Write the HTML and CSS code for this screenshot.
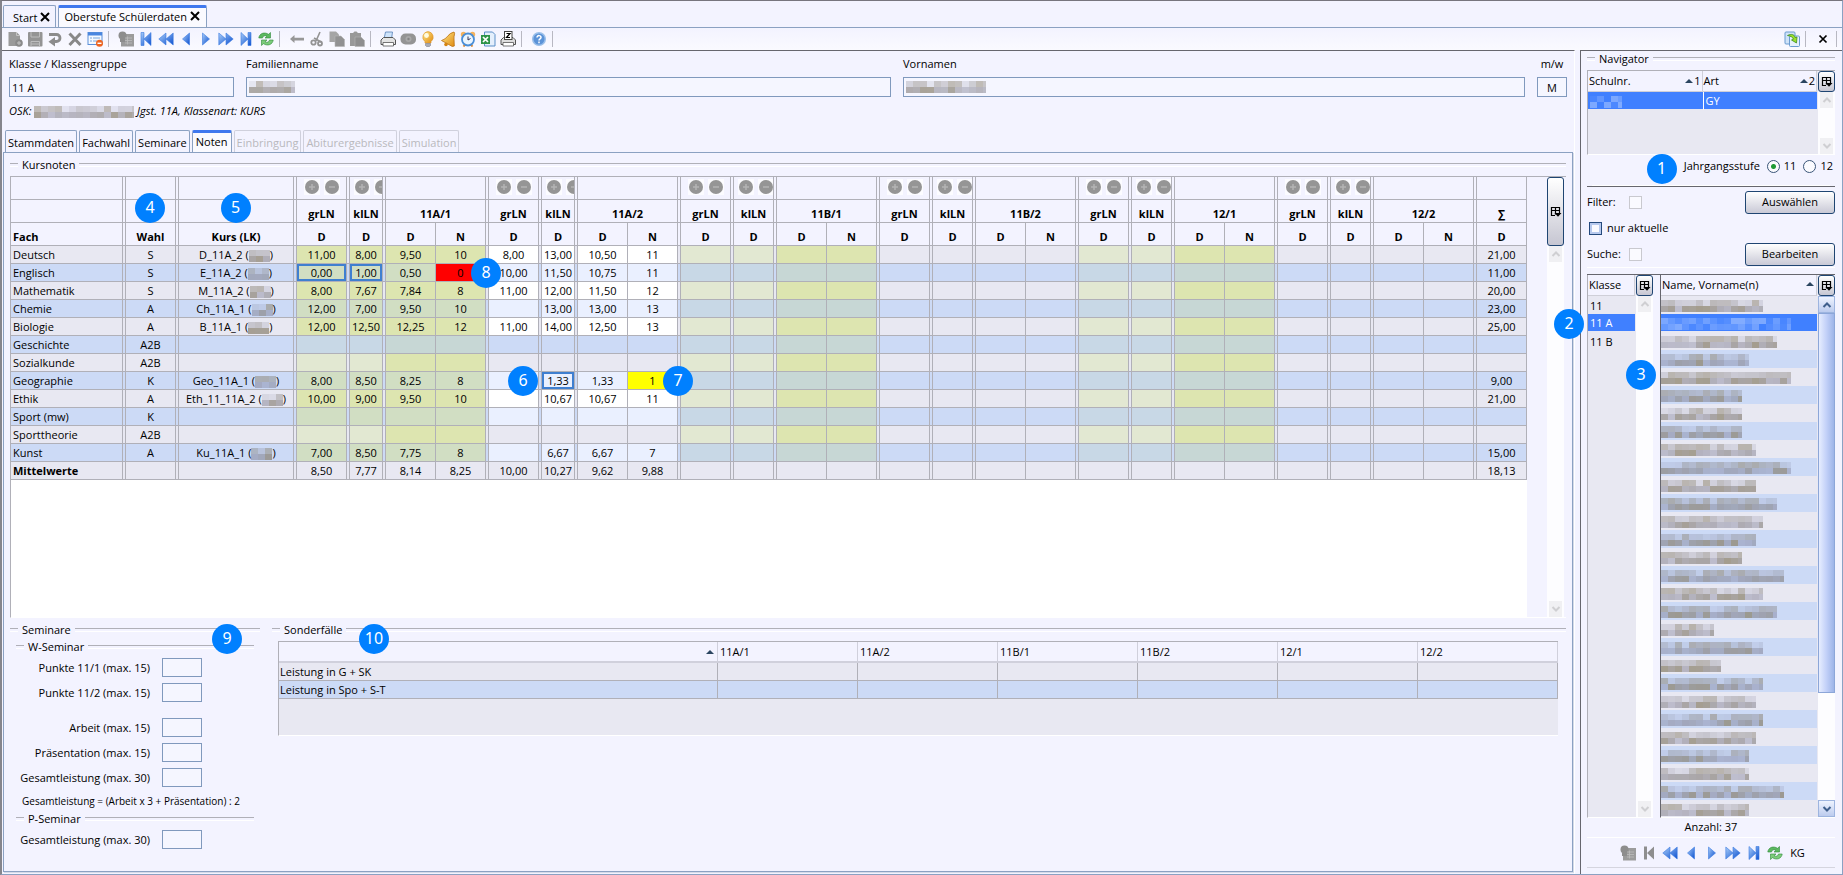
FILE: index.html
```html
<!DOCTYPE html>
<html lang="de">
<head>
    <meta charset="UTF-8">
    <meta name="viewport" content="width=device-width, initial-scale=1.0">
    <title>Oberstufe Schülerdaten</title>
    <link rel="stylesheet" href="styles.css">
</head>
<body>
    <svg class="sprite" aria-hidden="true">
        <defs>
            <linearGradient id="blue" x1="0" y1="0" x2="1" y2="1">
                <stop offset="0" stop-color="#a9cdf8"/>
                <stop offset="1" stop-color="#0a4fd0"/>
            </linearGradient>
            <linearGradient id="gold" x1="0" y1="0" x2="1" y2="1">
                <stop offset="0" stop-color="#ffe88a"/>
                <stop offset="1" stop-color="#e08a10"/>
            </linearGradient>
        </defs>
        <symbol id="new" viewBox="0 0 16 16"><path d="M1.500 1h8l3.500 3.500V15H1.500z" fill="#9a9a9a"/><path d="M9.500 1v3.500H13" fill="none" stroke="#c4c4c4"/><circle cx="12" cy="12" r="3.800" fill="#8a8a8a"/><path d="M12 10v4M10 12h4" stroke="#c4c4c4"/></symbol>
        <symbol id="save" viewBox="0 0 16 16"><rect x="1" y="1" width="14.500" height="14.500" rx="1" fill="#949494"/><path d="M4 1v5h8.500V1M4 15.500v-5h8.500v5M4 13h8" fill="none" stroke="#bdbdbd"/></symbol>
        <symbol id="undo" viewBox="0 0 16 16"><path d="M2 3.500h7.500a3.500 3.500 0 0 1 0 7H7" fill="none" stroke="#8c8c8c" stroke-width="2.800"/><path d="M8 6v9.500L1.500 10.700z" fill="#8c8c8c"/></symbol>
        <symbol id="delete" viewBox="0 0 16 16"><path d="M2.500 2.500l11 11.500M13.500 2.500L2.500 14" stroke="#888" stroke-width="3"/></symbol>
        <symbol id="form" viewBox="0 0 16 16"><rect x="1" y="1.500" width="14" height="12" fill="#f4f9ff" stroke="#5b8fd8"/><path d="M1 3h14" stroke="#4a86e0" stroke-width="3"/><path d="M3 7h2M6 7h7M3 10h2M6 10h4" stroke="#7aa6dc"/><circle cx="12.500" cy="12.300" r="3.500" fill="#ee6420"/><path d="M10.500 12.300h4" stroke="#fff" stroke-width="1.400"/></symbol>
        <symbol id="table" viewBox="0 0 16 16"><rect x="3" y="3" width="13" height="12.500" fill="#9b9b9b"/><circle cx="4.500" cy="4.500" r="4" fill="#8d8d8d"/><path d="M2 8h5v3H2z" fill="#8d8d8d"/><path d="M7 7h7M7 9.500h7M7 12h7M9.500 5.500v8" stroke="#bcbcbc" stroke-width=".8"/></symbol>
        <symbol id="first" viewBox="0 0 16 16"><path d="M3 1.500h3v13H3zM13 1.500v13L6 8z" fill="url(#blue)" stroke="#3a7be0" stroke-width=".6"/></symbol>
        <symbol id="first-off" viewBox="0 0 16 16"><path d="M3 1.500h3v13H3zM13 1.500v13L6 8z" fill="#8e8e8e"/></symbol>
        <symbol id="rewind" viewBox="0 0 16 16"><path d="M8 2v12L.8 8zM15.200 2v12L8 8z" fill="url(#blue)" stroke="#3a7be0" stroke-width=".6"/></symbol>
        <symbol id="prev" viewBox="0 0 16 16"><path d="M11.500 2v12L4.500 8z" fill="url(#blue)" stroke="#3a7be0" stroke-width=".6"/></symbol>
        <symbol id="next" viewBox="0 0 16 16"><path d="M4.500 2v12L11.500 8z" fill="url(#blue)" stroke="#3a7be0" stroke-width=".6"/></symbol>
        <symbol id="forward" viewBox="0 0 16 16"><path d="M.8 2v12L8 8zM8 2v12L15.200 8z" fill="url(#blue)" stroke="#3a7be0" stroke-width=".6"/></symbol>
        <symbol id="last" viewBox="0 0 16 16"><path d="M3 1.500v13L10 8zM10 1.500h3v13h-3z" fill="url(#blue)" stroke="#3a7be0" stroke-width=".6"/></symbol>
        <symbol id="refresh" viewBox="0 0 16 16"><path d="M.8 7c.5-4.500 5.500-6.500 9.700-3.700L12.500 1.500v5.500H7l2-1.700C6.500 4 5 5 4.500 7z" fill="#5cb860" stroke="#2f8a3a" stroke-width=".6"/><path d="M15.200 9c-.5 4.500-5.500 6.500-9.700 3.700L3.500 14.500V9H9l-2 1.700c2.500 1.300 4 .3 4.500-1.700z" fill="#7ccc7a" stroke="#2f8a3a" stroke-width=".6"/></symbol>
        <symbol id="arrow" viewBox="0 0 16 16"><path d="M1 8l4.500-4v2.700H15v2.800H5.500V12z" fill="#979797"/></symbol>
        <symbol id="cut" viewBox="0 0 16 16"><path d="M11 1L7 10M5 7l7 4" stroke="#939393" stroke-width="1.600" fill="none"/><circle cx="4.500" cy="11.500" r="2.200" fill="none" stroke="#939393" stroke-width="1.800"/><circle cx="11" cy="12.500" r="2" fill="none" stroke="#939393" stroke-width="1.800"/></symbol>
        <symbol id="copy" viewBox="0 0 16 16"><path d="M.5.5h6.500l3 3V11H.5z" fill="#a5a5a5"/><path d="M6 5h6l3.500 3.500v7H6z" fill="#929292" stroke="#b5b5b5" stroke-width=".6"/></symbol>
        <symbol id="paste" viewBox="0 0 16 16"><path d="M1 2h3l1.500-1.500h2L9 2h3v13H1z" fill="#999"/><path d="M6 6h6l3.500 3.500v6H6z" fill="#8f8f8f" stroke="#b5b5b5" stroke-width=".6"/></symbol>
        <symbol id="print" viewBox="0 0 16 16"><path d="M4 8L5.500 1h7L11.500 8z" fill="#cfe4fb" stroke="#5580b8" stroke-width=".8"/><path d="M1 9l2.500-2.500h9.500L15.500 9v4.500H1z" fill="#e4e4e4" stroke="#555"/><path d="M3 11.500h10.500v3.500H3z" fill="#fff" stroke="#555" stroke-width=".8"/></symbol>
        <symbol id="eye" viewBox="0 0 16 16"><rect x=".5" y="2.500" width="15.500" height="11" rx="5" fill="#949494"/><circle cx="8.500" cy="8" r="3" fill="#a8a8a8"/><circle cx="8.500" cy="8" r="1.200" fill="#858585"/></symbol>
        <symbol id="bulb" viewBox="0 0 16 16"><path d="M8 .6a5.600 5.600 0 0 1 3 10V12H5v-1.400A5.600 5.600 0 0 1 8 .6z" fill="url(#gold)" stroke="#e09a30" stroke-width=".7"/><circle cx="6.500" cy="4.500" r="2.400" fill="#fffbe0"/><path d="M5.500 12.500h5v2l-1 1h-3l-1-1z" fill="#a9abb5" stroke="#6f7280" stroke-width=".5"/></symbol>
        <symbol id="bell" viewBox="0 0 16 16"><path d="M14 1c1.500 1.500-.5 4 0 7l.3 7-2 .5L1.500 9.500C7 8.500 8 2 14 1z" fill="url(#gold)" stroke="#b97010" stroke-width=".8"/><circle cx="6" cy="13.500" r="1.800" fill="#d58412"/></symbol>
        <symbol id="clock" viewBox="0 0 16 16"><circle cx="3.500" cy="3.500" r="2.700" fill="#f4b25e"/><circle cx="12.500" cy="3.500" r="2.700" fill="#f4b25e"/><path d="M3.500 15.500l2-2.500M12.500 15.500l-2-2.500" stroke="#e08a30" stroke-width="2"/><circle cx="8" cy="8.500" r="6" fill="#eaf5ff" stroke="#4a8ed6" stroke-width="1.800"/><path d="M8 5.500v3.500l2.500-1.500" fill="none" stroke="#335"/></symbol>
        <symbol id="excel" viewBox="0 0 16 16"><path d="M4.500 1h8l2.500 2.500V15H4.500z" fill="#e4effc" stroke="#5b8fc8"/><rect x="1" y="4" width="9" height="9" fill="#2e9448"/><path d="M3 6l5 5M8 6l-5 5" stroke="#fff" stroke-width="1.700"/></symbol>
        <symbol id="print-z" viewBox="0 0 16 16"><path d="M1 9l2.500-2.500h9.500L15.500 9v4.500H1z" fill="#dedede" stroke="#555"/><path d="M3 11.500h10.500v3.500H3z" fill="#fff" stroke="#555" stroke-width=".8"/><rect x="4.500" y=".5" width="7.500" height="8" fill="#fff" stroke="#444"/><path d="M6.500 2.500h3.500L6.500 6.500H10" fill="none" stroke="#000" stroke-width="1.200"/></symbol>
        <symbol id="help" viewBox="0 0 16 16"><circle cx="8" cy="8" r="6.300" fill="#5b93d8" stroke="#9cc0ea" stroke-width="1.500"/><path d="M6 6.500c0-2.600 4-2.400 4 0 0 1.500-2 1.400-2 3M8 10.500v1.700" fill="none" stroke="#fff" stroke-width="1.500"/></symbol>
        <symbol id="export" viewBox="0 0 16 16"><rect x="1" y="1" width="10" height="12" rx="1" fill="#cfe3f8" stroke="#6a9bd0"/><rect x="5.500" y="5" width="10" height="10.500" rx="1" fill="#e6f1fd" stroke="#6a9bd0"/><path d="M3.500 4.500c4-2 7-1 7.500 2l2-.5-.5 6-5-3 2-.8C9 6.500 7 5 3.500 4.500z" fill="#9ae02c" stroke="#3c8a1c" stroke-width=".8"/></symbol>
        <symbol id="close" viewBox="0 0 16 16"><path d="M4.500 4.500l7 7M11.500 4.500l-7 7" stroke="#000" stroke-width="1.700"/></symbol>
        <symbol id="close-tab" viewBox="0 0 12 12"><path d="M2 2l8 8M10 2l-8 8" stroke="#000" stroke-width="2"/></symbol>
        <symbol id="plus" viewBox="0 0 16 16"><circle cx="8" cy="8" r="7" fill="#959595"/><path d="M8 5v6M5 8h6" stroke="#b4b4b4" stroke-width="1.500"/></symbol>
        <symbol id="minus" viewBox="0 0 16 16"><circle cx="8" cy="8" r="7" fill="#959595"/><path d="M5 8h6" stroke="#b4b4b4" stroke-width="1.500"/></symbol>
        <symbol id="columns" viewBox="0 0 12 12"><path d="M1.500 1.500h8v3h-8zM1.500 4.500v5H5M5.500 1.500v7M1.500 4.500h8V7" fill="none" stroke="#000" stroke-width="1.200"/><path d="M4.500 7h7L8 10.700z"/></symbol>
        <symbol id="up" viewBox="0 0 10 10"><path d="M1.500 7L5 3.500 8.500 7" fill="none" stroke="currentColor" stroke-width="2"/></symbol>
        <symbol id="down" viewBox="0 0 10 10"><path d="M1.500 3L5 6.500 8.500 3" fill="none" stroke="currentColor" stroke-width="2"/></symbol>
    </svg>

    <nav class="window-tabs">
        <div class="window-tab">Start <button class="tab-close" aria-label="Start schließen"><svg><use href="#close-tab"/></svg></button></div>
        <div class="window-tab active">Oberstufe Schülerdaten <button class="tab-close" aria-label="Oberstufe schließen"><svg><use href="#close-tab"/></svg></button></div>
    </nav>

    <div class="toolbar">
        <div class="tools" data-icons="new save undo delete form"></div>
        <div class="tools" data-icons="table first rewind prev next forward last refresh"></div>
        <div class="tools" data-icons="arrow cut copy paste"></div>
        <div class="tools" data-icons="print eye bulb bell clock excel print-z"></div>
        <div class="tools" data-icons="help"></div>
        <div class="tools end" data-icons="export"></div>
        <div class="tools" data-icons="close"></div>
    </div>

    <div class="workspace">
        <main class="main-pane">
            <div class="student">
                <div class="field">
                    <label for="klasse">Klasse / Klassengruppe</label>
                    <input type="text" id="klasse" value="11 A">
                </div>
                <div class="field">
                    <label for="familienname">Familienname</label>
                    <div class="masked"><input type="text" id="familienname"><span class="mosaic" data-width="46"></span></div>
                </div>
                <div class="field">
                    <label for="vornamen">Vornamen</label>
                    <div class="masked"><input type="text" id="vornamen"><span class="mosaic" data-width="80"></span></div>
                </div>
                <div class="field sex">
                    <label for="mw">m/w</label>
                    <input type="text" id="mw" value="M">
                </div>
            </div>
            <p class="osk">OSK: <span class="mosaic" data-width="100"></span> Jgst. 11A, Klassenart: KURS</p>

            <div class="tabs">
                <button>Stammdaten</button>
                <button>Fachwahl</button>
                <button>Seminare</button>
                <button class="active">Noten</button>
                <button disabled>Einbringung</button>
                <button disabled>Abiturergebnisse</button>
                <button disabled>Simulation</button>
            </div>

            <div class="tab-page">
                <h2 class="titled">Kursnoten</h2>
                <div class="grades-pane">
                    <div class="grades-scroll">
                        <table class="grades" id="grades"></table>
                    </div>
                    <div class="scroll-side">
                        <button class="columns-button" aria-label="Spalten"><svg><use href="#columns"/></svg></button>
                        <div class="scrollbar">
                            <button aria-label="Nach oben"><svg><use href="#up"/></svg></button>
                            <button aria-label="Nach unten"><svg><use href="#down"/></svg></button>
                        </div>
                    </div>
                </div>

                <div class="lower">
                    <section class="seminars">
                        <h2 class="titled">Seminare</h2>
                        <span class="mark mark-nine">9</span>
                        <div class="seminar-group">
                            <h3 class="titled">W-Seminar</h3>
                            <div class="points"><label for="p1">Punkte 11/1 (max. 15)</label><input type="text" id="p1"></div>
                            <div class="points spaced"><label for="p2">Punkte 11/2 (max. 15)</label><input type="text" id="p2"></div>
                            <div class="points"><label for="arbeit">Arbeit (max. 15)</label><input type="text" id="arbeit"></div>
                            <div class="points"><label for="praes">Präsentation (max. 15)</label><input type="text" id="praes"></div>
                            <div class="points"><label for="wges">Gesamtleistung (max. 30)</label><input type="text" id="wges"></div>
                            <p class="formula">Gesamtleistung = (Arbeit x 3 + Präsentation) : 2</p>
                            <h3 class="titled">P-Seminar</h3>
                            <div class="points"><label for="pges">Gesamtleistung (max. 30)</label><input type="text" id="pges"></div>
                        </div>
                    </section>
                    <section class="special">
                        <h2 class="titled">Sonderfälle</h2>
                        <span class="mark mark-ten">10</span>
                        <div class="special-pane">
                            <table class="special-table">
                                <thead>
                                    <tr><th class="sorted"><span class="sort"></span></th><th>11A/1</th><th>11A/2</th><th>11B/1</th><th>11B/2</th><th>12/1</th><th>12/2</th></tr>
                                </thead>
                                <tbody>
                                    <tr><td>Leistung in G + SK</td><td></td><td></td><td></td><td></td><td></td><td></td></tr>
                                    <tr><td>Leistung in Spo + S-T</td><td></td><td></td><td></td><td></td><td></td><td></td></tr>
                                </tbody>
                            </table>
                        </div>
                    </section>
                </div>
            </div>
        </main>

        <aside class="navigator">
            <h2 class="titled">Navigator</h2>
            <div class="list-pane schools">
                <table class="list">
                    <thead><tr><th><div class="head">Schulnr. <span><i class="sort"></i>1</span></div></th><th><div class="head">Art <span><i class="sort"></i>2</span></div></th></tr></thead>
                    <tbody><tr class="selected"><td><span class="mosaic light" data-width="32"></span></td><td>GY</td></tr></tbody>
                </table>
                <div class="scroll-side">
                    <button class="columns-button" aria-label="Spalten"><svg><use href="#columns"/></svg></button>
                    <div class="scrollbar">
                        <button aria-label="Nach oben"><svg><use href="#up"/></svg></button>
                        <button aria-label="Nach unten"><svg><use href="#down"/></svg></button>
                    </div>
                </div>
            </div>

            <div class="year">
                <span class="mark">1</span>
                <span>Jahrgangsstufe</span>
                <label><input type="radio" name="stufe" checked> 11</label>
                <label><input type="radio" name="stufe"> 12</label>
            </div>

            <div class="filters">
                <label for="filter">Filter:</label>
                <input type="checkbox" id="filter" disabled>
                <button class="push">Auswählen</button>
                <label class="current"><input type="checkbox"> nur aktuelle</label>
                <label for="suche">Suche:</label>
                <input type="checkbox" id="suche" disabled>
                <button class="push">Bearbeiten</button>
            </div>

            <div class="lists">
                <div class="list-pane classes">
                    <table class="list">
                        <thead><tr><th>Klasse</th></tr></thead>
                        <tbody>
                            <tr><td>11</td></tr>
                            <tr class="selected"><td>11 A<span class="mark mark-two">2</span></td></tr>
                            <tr><td>11 B</td></tr>
                        </tbody>
                    </table>
                    <div class="scroll-side">
                        <button class="columns-button" aria-label="Spalten"><svg><use href="#columns"/></svg></button>
                        <div class="scrollbar">
                            <button aria-label="Nach oben"><svg><use href="#up"/></svg></button>
                            <button aria-label="Nach unten"><svg><use href="#down"/></svg></button>
                        </div>
                    </div>
                    <span class="mark mark-three">3</span>
                </div>
                <div class="list-pane names">
                    <table class="list">
                        <thead><tr><th><div class="head">Name, Vorname(n) <i class="sort"></i></div></th></tr></thead>
                        <tbody id="names"></tbody>
                    </table>
                    <div class="scroll-side">
                        <button class="columns-button" aria-label="Spalten"><svg><use href="#columns"/></svg></button>
                        <div class="scrollbar live">
                            <button aria-label="Nach oben"><svg><use href="#up"/></svg></button>
                            <div class="thumb"></div>
                            <button aria-label="Nach unten"><svg><use href="#down"/></svg></button>
                        </div>
                    </div>
                </div>
            </div>
            <p class="count">Anzahl: 37</p>
            <div class="nav-tools">
                <div class="tools" data-icons="table first-off rewind prev next forward last refresh"></div>
                <span>KG</span>
            </div>
        </aside>
    </div>

    <script>
        // Toolbar buttons
        document.querySelectorAll('.tools').forEach(group => {
            group.innerHTML = group.dataset.icons.split(' ')
                .map(name => `<button aria-label="${name}"><svg><use href="#${name}"/></svg></button>`)
                .join('');
        });

        // Grades table: per half-year grLN, klLN, D, N
        const terms = ['11A/1', '11A/2', '11B/1', '11B/2', '12/1', '12/2'];
        const rows = [
            ['Deutsch', 'S', 'D_11A_2', '11,00 8,00 9,50 10', '8,00 13,00 10,50 11', '21,00'],
            ['Englisch', 'S', 'E_11A_2', '0,00 1,00 0,50 0', '10,00 11,50 10,75 11', '11,00'],
            ['Mathematik', 'S', 'M_11A_2', '8,00 7,67 7,84 8', '11,00 12,00 11,50 12', '20,00'],
            ['Chemie', 'A', 'Ch_11A_1', '12,00 7,00 9,50 10', '- 13,00 13,00 13', '23,00'],
            ['Biologie', 'A', 'B_11A_1', '12,00 12,50 12,25 12', '11,00 14,00 12,50 13', '25,00'],
            ['Geschichte', 'A2B', '', '', '', ''],
            ['Sozialkunde', 'A2B', '', '', '', ''],
            ['Geographie', 'K', 'Geo_11A_1', '8,00 8,50 8,25 8', '- 1,33 1,33 1', '9,00'],
            ['Ethik', 'A', 'Eth_11_11A_2', '10,00 9,00 9,50 10', '- 10,67 10,67 11', '21,00'],
            ['Sport (mw)', 'K', '', '', '', ''],
            ['Sporttheorie', 'A2B', '', '', '', ''],
            ['Kunst', 'A', 'Ku_11A_1', '7,00 8,50 7,75 8', '- 6,67 6,67 7', '15,00'],
            ['Mittelwerte', '', '', '8,50 7,77 8,14 8,25', '10,00 10,27 9,62 9,88', '18,13']
        ];
        const extras = {
            'Englisch-0-0': 'focus', 'Englisch-0-1': 'focus', 'Englisch-0-3': 'failed',
            'Geographie-1-1': 'focus', 'Geographie-1-3': 'warning'
        };
        const marks = {
            'Englisch-0-3': '<span class="mark mark-edge">8</span>',
            'Geographie-1-0': '<span class="mark mark-inside">6</span>',
            'Geographie-1-3': '<span class="mark mark-edge">7</span>'
        };
        const steppers = '<div class="steppers"><button aria-label="mehr"><svg><use href="#plus"/></svg></button><button aria-label="weniger"><svg><use href="#minus"/></svg></button></div>';

        let html = '<colgroup><col class="c-fach"><col class="c-d"><col class="c-kurs">';
        terms.forEach((t, i) => {
            html += `<col class="c-d"><col class="${i < 2 ? 'c-kl' : 'c-kl-wide'}"><col class="c-d"><col class="c-n">`;
        });
        html += '<col class="c-d"></colgroup><thead>';
        html += '<tr class="stepper-row"><th></th><th class="g"></th><th class="g"></th>';
        terms.forEach(() => {
            html += `<th class="g">${steppers}</th><th class="g kl">${steppers}</th><th class="g" colspan="2"></th>`;
        });
        html += '<th class="g"></th></tr><tr><th></th><th class="g"><span class="mark mark-head">4</span></th><th class="g"><span class="mark mark-head">5</span></th>';
        terms.forEach(t => {
            html += `<th class="g">grLN</th><th class="g">klLN</th><th class="g" colspan="2">${t}</th>`;
        });
        html += '<th class="g">∑</th></tr><tr><th class="fach">Fach</th><th class="g">Wahl</th><th class="g">Kurs (LK)</th>';
        terms.forEach(() => {
            html += '<th class="g">D</th><th class="g">D</th><th class="g">D</th><th>N</th>';
        });
        html += '<th class="g">D</th></tr></thead><tbody>';

        rows.forEach(([fach, wahl, kurs, first, second, sum]) => {
            const mean = fach === 'Mittelwerte';
            const open = first !== '' || fach === 'Sport (mw)';
            const course = kurs ? `${kurs} (<span class="mosaic" data-width="21"></span>)` : '';
            html += `<tr class="${mean ? 'mean' : ''}"><td class="fach">${fach}</td><td class="g">${wahl}</td><td class="g">${course}</td>`;
            terms.forEach((term, t) => {
                const values = (t === 0 ? first : t === 1 ? second : '').split(' ');
                for (let c = 0; c < 4; c++) {
                    const key = `${fach}-${t}-${c}`;
                    const names = [];
                    if (c < 3) names.push('g');
                    if (!mean) {
                        if (t === 0) names.push(open ? 'tint-open' : c < 2 ? 'tint-soft' : 'tint');
                        else if (t === 1 && open) names.push('editable');
                        else if (t === 2 || t === 4) names.push(c < 2 ? 'tint-soft' : 'tint');
                    }
                    if (extras[key]) names.push(extras[key]);
                    const value = !values[c] || values[c] === '-' ? '' : values[c];
                    html += `<td class="${names.join(' ')}">${value}${marks[key] || ''}</td>`;
                }
            });
            html += `<td class="g">${sum}</td></tr>`;
        });
        document.getElementById('grades').innerHTML = html + '</tbody>';

        // Student names are masked, only their lengths are known
        const lengths = [102, 130, 116, 88, 130, 81, 81, 81, 95, 130, 95, 116, 102, 95, 81, 123, 102, 116, 53, 102, 60, 102, 95, 102, 95, 88, 88, 123, 88];
        document.getElementById('names').innerHTML = lengths.map((w, i) =>
            `<tr class="${i === 1 ? 'selected' : ''}"><td><span class="mosaic ${i === 1 ? 'vivid' : ''}" data-width="${w}"></span></td></tr>`
        ).join('');

        // Fill every masked text with a mosaic of 7px blocks
        let seed = 7;
        const random = () => (seed = (seed * 16807) % 2147483647) / 2147483647;
        document.querySelectorAll('.mosaic').forEach(el => {
            const width = Number(el.dataset.width);
            let rects = '';
            for (let y = 0; y < 2; y++) {
                for (let x = 0; x < width; x += 7) {
                    const r = random();
                    let fill = `rgba(${95 + r * 40}, ${95 + r * 30}, ${125 - r * 25}, ${y ? 0.3 + r * 0.4 : 0.1 + r * 0.4})`;
                    if (el.classList.contains('vivid') || el.classList.contains('light')) fill = `rgba(255, 255, 255, ${r * 0.35})`;
                    rects += `<rect x="${x}" y="${y * 6}" width="7" height="6" fill="${fill}"/>`;
                }
            }
            el.innerHTML = `<svg width="${width}" height="12">${rects}</svg>`;
        });
    </script>
</body>
</html>
```
FILE: styles.css
```css
* { box-sizing: border-box; }
body {
    --bg: #f3f3ff;
    --line: #b0b0b8;
    --dark: #66666e;
    --edge: #8ba1c2;
    --odd: #e8e8f2;
    --even: #ccdaf6;
    --select: #4080ff;
    margin: 0;
    height: 100vh;
    display: flex;
    flex-direction: column;
    overflow: hidden;
    background: var(--bg);
    border-top: 1px solid #77757e;
    border-left: 2px solid #85858c;
    border-right: 1px solid var(--edge);
    border-bottom: 1px solid var(--edge);
    font: 11px/16px "Open Sans", "Noto Sans", sans-serif;
    color: #000;
}
h2, h3, p { margin: 0; font-size: 11px; font-weight: normal; }
button, input { font: inherit; color: inherit; margin: 0; }
button { padding: 0; border: 0; background: none; }
svg { display: block; }
.sprite { position: absolute; width: 0; height: 0; }
table { border-collapse: separate; border-spacing: 0; table-layout: fixed; }
th, td { padding: 0; }
input[type=text] { border: 1px solid #8099bd; background: #f5f6ff; outline: 0; }

/* window tabs and toolbar */
.window-tabs { display: flex; gap: 2px; height: 27px; padding: 4px 0 0 1px; border-bottom: 1px solid var(--edge); }
.window-tab { display: flex; align-items: center; gap: 2px; padding: 2px 4px 0 9px; border: 1px solid var(--edge); border-bottom: 0; border-radius: 2px 2px 0 0; }
.window-tab.active { padding: 0 5px 2px; border-top: 3px solid #3f78ee; background: #fafaff; }
.tab-close { padding-bottom: 2px; }
.tab-close svg { width: 12px; height: 12px; }
.toolbar { display: flex; align-items: center; height: 22px; padding: 0 5px 0 3px; background: linear-gradient(#f3f3ff, #fafaff); }
.tools { display: grid; grid-auto-flow: column; grid-auto-columns: 20px; }
.tools button { display: flex; justify-content: center; }
.tools svg { width: 16px; height: 16px; }
.toolbar .tools { padding-right: 3px; margin-right: 7px; border-right: 1px solid #b8b8c2; }
.toolbar .end { margin-left: auto; }
.toolbar .tools:last-child { margin-right: 0; }

/* panes */
.workspace { flex: 1; display: flex; gap: 5px; min-height: 0; }
.main-pane { flex: 1; min-width: 0; display: flex; flex-direction: column; padding: 5px 1px 2px; border-top: 1px solid var(--dark); border-right: 1px solid #fff; }
.student { display: grid; grid-template-columns: 225px 645fr 622fr 30px; gap: 12px; padding: 0 6px; }
.field { display: flex; flex-direction: column; gap: 5px; }
.field input { width: 100%; height: 20px; padding: 0 2px; }
.sex { text-align: center; }
.sex input { text-align: center; }
.masked { position: relative; }
.masked .mosaic { position: absolute; left: 3px; top: 4px; }
.mosaic { display: inline-block; vertical-align: middle; }
.osk { margin-top: 6px; padding-left: 6px; font-style: italic; }
.tabs { display: flex; gap: 2px; height: 22px; margin-top: 11px; padding-left: 2px; }
.tabs button { padding: 3px 2px 0; border: 1px solid var(--edge); border-bottom: 0; border-radius: 2px 2px 0 0; }
.tabs .active { padding: 0 3px 2px; border-top: 3px solid #3f78ee; background: #fafaff; }
.tabs button:disabled { color: #b9b9bd; border-color: #cfd0dc; }
.tab-page { flex: 1; min-height: 0; display: flex; flex-direction: column; padding: 4px 6px 22px; border: 1px solid var(--edge); box-shadow: 1px 1px 0 #d5dae8; }
.titled { display: flex; align-items: center; gap: 4px; white-space: nowrap; }
.titled::before, .titled::after { content: ""; height: 2px; border-top: 1px solid var(--line); border-bottom: 1px solid #fff; }
.titled::before { width: 8px; }
.titled::after { flex: 1; }

/* scroll bars */
.scroll-side { display: flex; flex-direction: column; flex: none; width: 17px; }
.columns-button { display: flex; align-items: center; justify-content: center; height: 21px; border: 1px solid #1f4572; border-radius: 3px; background: linear-gradient(#fff, #c6c6d2); }
.columns-button svg { width: 12px; height: 12px; }
.scrollbar { flex: 1; display: flex; flex-direction: column; justify-content: space-between; background: #fdfdff; }
.scrollbar button { display: flex; align-items: center; justify-content: center; height: 16px; margin: 0 2px; color: #cfcfd2; background: #f0f0f3; }
.scrollbar svg { width: 10px; height: 10px; }
.live button { height: 17px; margin: 0; color: #3f5f8c; border: 1px solid #9db4df; background: linear-gradient(#eef3ff, #bccbee); }
.live .thumb { flex: 0 1 380px; margin-bottom: auto; border: 1px solid #8ca6d8; background: linear-gradient(to right, #e6edff, #c2d0f8 50%, #9db4e8); }

/* grades */
.grades-pane { flex: 1; min-height: 0; display: flex; justify-content: space-between; margin-top: 3px; border-top: 1px solid var(--line); border-left: 1px solid var(--line); border-bottom: 1px solid #fff; }
.grades-scroll { min-width: 0; background: #fff; overflow: hidden; }
.grades-pane .scroll-side { margin-right: 2px; }
.grades-pane .columns-button { height: 69px; }
.grades { width: 1516px; }
.c-fach { width: 112px; }
.c-d { width: 53px; }
.c-kurs { width: 118px; }
.c-kl { width: 36px; }
.c-kl-wide { width: 43px; }
.c-n { width: 50px; }
.grades tr { --row: var(--odd); }
.grades thead tr { --row: var(--bg); }
.grades tbody tr:nth-child(even) { --row: var(--even); }
.grades th, .grades td { position: relative; background-color: var(--row); border-right: 1px solid var(--line); border-bottom: 1px solid var(--line); text-align: center; white-space: nowrap; }
.grades th { height: 23px; padding-top: 5px; font-weight: bold; }
.grades .stepper-row th { padding-top: 0; padding-bottom: 2px; }
.grades td { height: 18px; line-height: 17px; }
/* double line in front of a column group */
.grades .g { padding-left: 3px; background-image: linear-gradient(to right, var(--row) 2px, var(--line) 2px, var(--line) 3px, transparent 3px); }
.grades .fach { padding-left: 2px; text-align: left; }
.grades .mean .fach { font-weight: bold; }
.steppers { display: flex; justify-content: center; gap: 4px; }
.steppers button { background: #fcfcff; }
.steppers svg { width: 16px; height: 16px; }
.kl .steppers { justify-content: flex-start; padding-left: 4px; overflow: hidden; }
.kl .steppers button { flex: none; }
.grades .tint, .grades .tint-open { background-color: #dde5b0; }
.grades .tint-soft { background-color: #e2e8d2; }
.grades .editable { background-color: #fff; }
.grades tr:nth-child(even) .tint { background-color: #c7d7d5; }
.grades tr:nth-child(even) .tint-soft { background-color: #c8d8e6; }
.grades tr:nth-child(even) .tint-open { background-color: #d1dec3; }
.grades tr:nth-child(even) .editable { background-color: #eaf0ff; }
.grades tr .failed.failed { background-color: #f00; }
.grades tr:nth-child(even) .warning { background-color: #ff0; }
.focus::before { content: ""; position: absolute; inset: 0 0 0 3px; border: 2px solid #3f7fd0; }

/* numbered markers */
.mark { display: block; flex: none; width: 30px; height: 30px; border-radius: 50%; background: #0080ff; color: #fff; font: 16px/29px "Noto Sans", sans-serif; text-align: center; z-index: 2; }
td .mark, th .mark, .mark-nine, .mark-ten, .mark-three { position: absolute; }
.mark-head { left: 50%; bottom: -1px; margin-left: -14px; }
.mark-edge { left: 100%; top: -6px; margin-left: -14px; }
.mark-inside { right: 0; top: -6px; }
.mark-nine { right: 18px; top: 2px; }
.mark-ten { left: 87px; top: 2px; }
.mark-two { left: -34px; top: -5px; }
.mark-three { left: 38px; top: 85px; }

/* seminars */
.lower { display: flex; gap: 12px; margin-top: 4px; }
.seminars { position: relative; width: 250px; }
.seminar-group { padding: 1px 6px 0; }
.points { display: flex; gap: 12px; padding-right: 52px; margin-bottom: 6px; }
.points label { flex: 1; text-align: right; line-height: 19px; }
.points input { width: 40px; height: 19px; }
.seminar-group .titled { margin-bottom: 3px; }
.spaced { margin-bottom: 16px; }
.formula { padding-left: 6px; margin-bottom: 2px; font-size: 10px; }
.seminar-group .points:last-child { margin-bottom: 0; }
.special { position: relative; flex: 1; }
.special-pane { height: 95px; margin: 3px 8px 0 6px; border: 1px solid var(--line); border-right: 0; border-bottom-color: #fff; background: var(--odd); }
.special-table { width: 100%; }
.special-table th { width: 140px; height: 21px; padding: 0 2px; text-align: left; font-weight: normal; background: var(--bg); border-bottom: 2px solid #d0d0dc; border-right: 1px solid #d0d0dc; }
.special-table th:first-child { width: auto; }
.special-table .sorted { text-align: right; }
.special-table td { height: 18px; padding: 0 1px; border-right: 1px solid var(--line); border-bottom: 1px solid var(--line); line-height: 17px; }
.special-table tr:nth-child(even) td { background: var(--even); }
.sort { display: inline-block; border: 4px solid transparent; border-top: 0; border-bottom: 4px solid #2b4560; margin: 0 1px 2px; }

/* navigator */
.navigator { width: 262px; display: flex; flex-direction: column; padding: 0 7px 6px 6px; border-top: 1px solid var(--dark); border-left: 1px solid var(--dark); }
.list-pane { display: flex; justify-content: space-between; background: var(--odd); border: 1px solid var(--line); border-right: 0; border-bottom-color: #fff; }
.list-pane .scroll-side { background: var(--bg); }
.list { width: calc(100% - 18px); align-self: flex-start; }
.list th { height: 21px; padding: 0 1px; text-align: left; font-weight: normal; background: var(--bg); border-bottom: 1px solid #cfcfd8; border-right: 1px solid #cfcfd8; }
.list td { position: relative; height: 18px; padding: 0 2px; line-height: 17px; }
.list .selected td { background: var(--select); color: #fff; border-bottom: 1px solid var(--odd); }
.head { display: flex; justify-content: space-between; align-items: center; }
.schools { height: 85px; margin-top: 3px; }
.schools td + td { border-left: 1px solid #fff; }
.year { display: flex; justify-content: flex-end; align-items: center; gap: 7px; height: 22px; padding-right: 2px; }
.year .mark { margin: 6px 0 0; }
.year label { display: flex; align-items: center; gap: 4px; }
.year input { appearance: none; width: 13px; height: 13px; border: 1px solid #3a5578; border-radius: 50%; background: #fbfbff; }
.year input:checked { background: radial-gradient(circle, #1f9a35 0 2px, #fbfbff 3px); }
.filters { display: grid; grid-template-columns: 42px 1fr 90px; grid-auto-rows: 26px; align-items: center; margin-top: 9px; padding-top: 2px; border-top: 1px solid var(--dark); border-bottom: 1px solid #fff; box-shadow: 0 -6px 0 -5px #fff; }
.filters input { appearance: none; width: 13px; height: 13px; border: 1px solid #c9c9cf; background: #fafaff; }
.current { grid-column: 1 / 4; display: flex; align-items: center; gap: 5px; padding-left: 2px; }
.filters .current input { border: 1px solid #24497c; box-shadow: inset 0 0 0 2px #b7c9ee; }
.push { height: 23px; border: 1px solid #1f4572; border-radius: 3px; background: linear-gradient(#fff, #c9c9d6); }
.lists { flex: 1; min-height: 0; display: flex; border-top: 1px solid var(--dark); margin-top: 6px; }
.lists .list-pane { border-top: 0; }
.classes { position: relative; width: 66px; }
.names { flex: 1; margin-left: 7px; border-left: 1px solid var(--dark); overflow: hidden; }
.names tr:nth-child(even):not(.selected) td { background: var(--even); }
.names td { padding: 0; line-height: 14px; }
.count { padding: 1px 0 2px; text-align: center; border-bottom: 1px solid #fff; }
.nav-tools { display: flex; align-items: center; justify-content: center; gap: 5px; height: 30px; border-bottom: 1px solid #d5d5df; }
.nav-tools .tools { grid-auto-columns: 21px; }
```
